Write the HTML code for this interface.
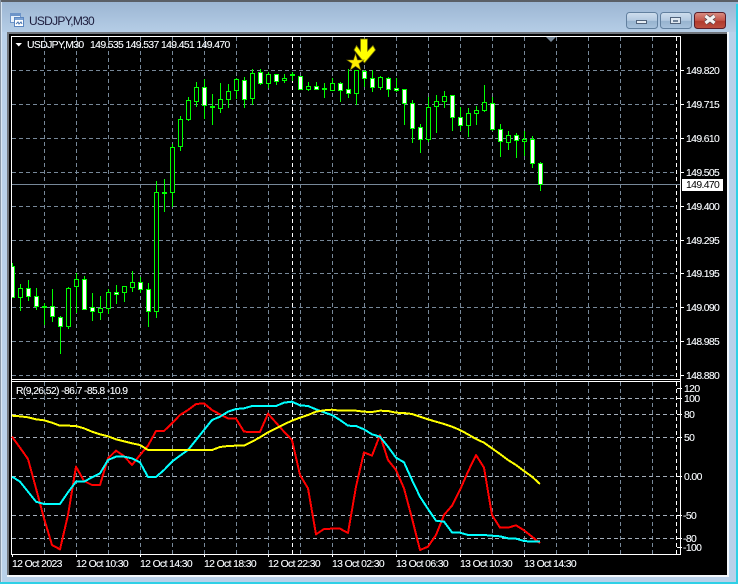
<!DOCTYPE html>
<html>
<head>
<meta charset="utf-8">
<style>
html,body{margin:0;padding:0;background:#b9d1ea;width:738px;height:584px;overflow:hidden}
svg{display:block;position:absolute;left:0;top:0}
text{font-family:"Liberation Sans",sans-serif;font-size:10.4px;fill:#fff;stroke:#e6f2ff;stroke-width:.12px;letter-spacing:-.62px}
</style>
</head>
<body>
<svg width="738" height="584" viewBox="0 0 738 584" xmlns="http://www.w3.org/2000/svg">
<defs>
<linearGradient id="tb" x1="0" y1="0" x2="0" y2="1"><stop offset="0" stop-color="#9cb6d3"/><stop offset="1" stop-color="#b5cde6"/></linearGradient>
<linearGradient id="bb" x1="0" y1="0" x2="0" y2="1"><stop offset="0" stop-color="#cfdeee"/><stop offset=".5" stop-color="#b3c9e0"/><stop offset=".55" stop-color="#97b3cf"/><stop offset="1" stop-color="#a9c3dd"/></linearGradient>
<linearGradient id="cb" x1="0" y1="0" x2="0" y2="1"><stop offset="0" stop-color="#d98f84"/><stop offset=".5" stop-color="#c4554a"/><stop offset=".55" stop-color="#b13a2e"/><stop offset="1" stop-color="#bd5142"/></linearGradient>
</defs>
<!-- window frame -->
<rect width="738" height="584" fill="#b9d1ea"/>
<rect x="0" y="2" width="738" height="30" fill="url(#tb)"/>
<rect x="0" y="0" width="738" height="2" fill="#5a5f66"/>
<rect x="0" y="0" width="1" height="584" fill="#8a98a8"/>
<rect x="1" y="2" width="1" height="580" fill="#d9e6f3"/>
<rect x="736" y="4" width="2" height="580" fill="#2fd0e6"/>
<rect x="0" y="582" width="738" height="2" fill="#2fd0e6"/>
<rect x="7" y="32" width="720" height="2" fill="#70757c"/>
<rect x="7" y="32" width="2" height="544" fill="#70757c"/>
<rect x="727" y="32" width="2" height="545" fill="#f4f8fc"/>
<rect x="7" y="575" width="722" height="2" fill="#f4f8fc"/>
<rect x="9" y="34" width="718" height="541" fill="#000"/>
<!-- title icon -->
<rect x="10.5" y="13.5" width="10" height="9" fill="#e8f1fb" stroke="#6d94c8"/>
<rect x="11" y="14" width="9" height="2" fill="#6d94c8"/>
<rect x="14.5" y="17.5" width="9" height="9" fill="#fff" stroke="#5b86c0"/>
<rect x="15" y="18" width="8" height="2" fill="#7ba2d4"/>
<path d="M16 24l2-2 1 2 2-2 1 2" fill="none" stroke="#4a76b0"/>
<text x="29" y="25" style="font-size:12px;fill:#1c1c3c;stroke:none;letter-spacing:-.75px">USDJPY,M30</text>
<!-- buttons -->
<rect x="626.5" y="12.5" width="31" height="16" rx="3" fill="url(#bb)" stroke="#62809f"/>
<rect x="636.5" y="20.5" width="10" height="3" fill="#e6edf4" stroke="#50627a"/>
<rect x="660.5" y="12.5" width="31" height="16" rx="3" fill="url(#bb)" stroke="#62809f"/>
<rect x="670.5" y="17.5" width="10" height="6" fill="#dfe8f1" stroke="#50627a"/>
<rect x="673" y="20" width="5" height="2" fill="#6f8299"/>
<rect x="694.5" y="12.5" width="31" height="16" rx="3" fill="url(#cb)" stroke="#5a1e2a"/>
<path d="M705.5 16l9 7M714.5 16l-9 7" stroke="#5a4a50" stroke-width="4.6"/>
<path d="M705.5 16l9 7M714.5 16l-9 7" stroke="#f4f4f4" stroke-width="3.2"/>
<!-- grid -->
<g stroke="#778899" stroke-width="1" fill="none" stroke-dasharray="4 3">
<path d="M44.5 37V379M76.5 37V379M108.5 37V379M140.5 37V379M172.5 37V379M204.5 37V379M236.5 37V379M268.5 37V379M300.5 37V379M332.5 37V379M364.5 37V379M396.5 37V379M428.5 37V379M460.5 37V379M492.5 37V379M524.5 37V379M556.5 37V379M588.5 37V379M620.5 37V379M652.5 37V379"/>
<path d="M44.5 382V554M76.5 382V554M108.5 382V554M140.5 382V554M172.5 382V554M204.5 382V554M236.5 382V554M268.5 382V554M300.5 382V554M332.5 382V554M364.5 382V554M396.5 382V554M428.5 382V554M460.5 382V554M492.5 382V554M524.5 382V554M556.5 382V554M588.5 382V554M620.5 382V554M652.5 382V554"/>
<path d="M12 70.5H676M12 104.5H676M12 138.5H676M12 172.5H676M12 206.5H676M12 240.5H676M12 273.5H676M12 307.5H676M12 341.5H676M12 375.5H676"/>
</g>
<g stroke="#a4aeba" stroke-width="1" fill="none" stroke-dasharray="4 3">
<path d="M12 398.5H676M12 414.5H676M12 437.5H676M12 476.5H676M12 515.5H676M12 538.5H676"/>
</g>
<path d="M292.5 37V379M292.5 382V554M676.5 37V379M676.5 382V554" stroke="#fff" stroke-dasharray="4 3" fill="none"/>
<path d="M12 184.5H681" stroke="#778899"/>
<!-- wicks -->
<path stroke="#00ff00" stroke-width="1" fill="none" d="M12.5 263V266M20.5 284V311M28.5 280V301M36.5 288V310M44.5 303V325M52.5 289V322M60.5 316V354M68.5 287V329M76.5 273V313M84.5 276V310M92.5 293V321M100.5 296V320M108.5 289V314M116.5 285V304M124.5 286V302M132.5 271V292M140.5 277V293M148.5 283V327M156.5 181V318M164.5 179V212M172.5 144V207M180.5 116V151M188.5 97V121M196.5 82V107M204.5 79V119M212.5 94V125M220.5 83V113M228.5 84V108M236.5 78V99M244.5 77V108M252.5 69V105M260.5 69V85M268.5 72V88M276.5 74V85M284.5 74V83M292.5 72V81M300.5 76V90M308.5 82V91M316.5 82V90M324.5 83V98M332.5 78V91M340.5 82V102M348.5 69V98M356.5 70V105M364.5 70V87M372.5 70V92M380.5 76V90M388.5 77V97M396.5 78V92M404.5 89V125M412.5 100V143M420.5 124V153M428.5 97V142M436.5 95V133M444.5 91V108M452.5 95V131M460.5 107V131M468.5 108V137M476.5 106V125M484.5 85V112M492.5 97V131M500.5 124V157M508.5 131V150M516.5 133V158M524.5 131V156M532.5 136V168M540.5 162V191"/>
<!-- filled bodies -->
<path stroke="#00ff00" fill="#fff" d="M12 266.5H14.5V297.5H12M26.5 288.5h4v8h-4zM34.5 296.5h4v10h-4zM50.5 306.5h4v10h-4zM58.5 317.5h4v9h-4zM82.5 279.5h4v30h-4zM90.5 307.5h4v4h-4zM114.5 292.5h4v2h-4zM138.5 282.5h4v7h-4zM146.5 289.5h4v22h-4zM202.5 87.5h4v18h-4zM242.5 80.5h4v19h-4zM258.5 72.5h4v11h-4zM274.5 74.5h4v7h-4zM298.5 76.5h4v13h-4zM314.5 86.5h4v3h-4zM338.5 83.5h4v7h-4zM346.5 89.5h4v4h-4zM362.5 71.5h4v7h-4zM370.5 78.5h4v9h-4zM386.5 78.5h4v11h-4zM394.5 88.5h4v2h-4zM402.5 89.5h4v14h-4zM410.5 103.5h4v25h-4zM418.5 127.5h4v12h-4zM450.5 95.5h4v22h-4zM458.5 117.5h4v8h-4zM490.5 103.5h4v26h-4zM498.5 129.5h4v12h-4zM514.5 135.5h4v5h-4zM530.5 139.5h4v24h-4zM538.5 163.5h4v21h-4z"/>
<!-- hollow bodies -->
<path stroke="#00ff00" fill="#000" d="M18.5 288.5h4v9h-4zM66.5 288.5h4v38h-4zM74.5 279.5h4v7h-4zM98.5 308.5h4v4h-4zM106.5 292.5h4v16h-4zM122.5 286.5h4v6h-4zM130.5 282.5h4v5h-4zM154.5 192.5h4v119h-4zM170.5 147.5h4v45h-4zM178.5 119.5h4v27h-4zM186.5 100.5h4v19h-4zM194.5 87.5h4v14h-4zM218.5 99.5h4v9h-4zM226.5 91.5h4v8h-4zM234.5 79.5h4v11h-4zM250.5 73.5h4v25h-4zM266.5 74.5h4v9h-4zM282.5 78.5h4v2h-4zM306.5 86.5h4v3h-4zM330.5 83.5h4v7h-4zM354.5 70.5h4v23h-4zM378.5 77.5h4v10h-4zM426.5 107.5h4v32h-4zM434.5 101.5h4v5h-4zM442.5 96.5h4v5h-4zM466.5 113.5h4v12h-4zM474.5 110.5h4v3h-4zM482.5 102.5h4v8h-4zM506.5 135.5h4v7h-4zM522.5 139.5h4v2h-4z"/>
<!-- dojis -->
<path stroke="#00ff00" stroke-width="2" fill="none" d="M42 307h5M162 193h5M210 107h5M290 75h5M322 89h5"/>
<!-- arrow and star -->
<path d="M360.5 39H367.5V51L373 45.5 375.5 50 364.5 63 354 50 356.5 45.5 360.5 51Z" fill="#ffff00" stroke="#6e6a00" stroke-width=".8"/>
<path d="M355.5 54L357.5 60H364L358.8 63.6 360.8 70 355.5 66.2 350.2 70 352.2 63.6 347 60H353.5Z" fill="#ffee00" stroke="#7a7000" stroke-width=".6"/>
<polygon points="546,37 556,37 551,42" fill="#778899"/>
<!-- chart borders -->
<path d="M11 36.5H680.5V554.5H11.5V36M11 379.5H681M11 381.5H681" stroke="#fff" fill="none"/>
<path d="M681 70.5h3M681 104.5h3M681 138.5h3M681 172.5h3M681 206.5h3M681 240.5h3M681 273.5h3M681 307.5h3M681 341.5h3M681 375.5h3M677 388.5h5M677 398.5h5M677 414.5h5M677 437.5h5M677 476.5h5M677 515.5h5M677 538.5h5M677 547.5h5M12.5 554V557M76.5 554V557M140.5 554V557M204.5 554V557M268.5 554V557M332.5 554V557M396.5 554V557M460.5 554V557M524.5 554V557" stroke="#fff" fill="none"/>
<!-- oscillator lines -->
<g transform="translate(0,375) scale(.33333)" fill="none" stroke-width="6" stroke-linejoin="round" shape-rendering="crispEdges">
<polyline stroke="#ff0000" points="36,185 60,218 84,252 108,340 132,430 156,510 180,523 204,420 228,275 252,318 276,330 300,330 324,250 348,227 372,243 396,270 420,240 444,212 468,168 492,168 516,145 540,120 564,105 588,87 612,85 636,105 660,118 684,130 708,131 732,170 756,171 780,171 804,116 828,143 852,170 876,195 900,300 924,340 948,478 972,462 996,461 1020,461 1044,474 1068,335 1092,232 1116,242 1140,180 1164,255 1188,285 1212,340 1236,430 1260,525 1284,515 1308,480 1332,420 1356,392 1380,345 1404,290 1428,240 1452,278 1476,420 1500,458 1524,458 1548,451 1572,466 1596,485 1620,505"/>
<polyline stroke="#00ffff" points="36,305 60,320 84,350 108,380 132,387 156,387 180,387 204,352 228,320 252,320 276,307 300,295 324,255 348,245 372,245 396,250 420,262 444,306 468,306 492,285 516,260 540,242 564,225 588,195 612,165 636,135 660,125 684,110 708,102 732,100 756,93 780,93 804,93 828,93 852,83 876,80 900,91 924,93 948,103 972,112 996,120 1020,135 1044,152 1068,153 1092,163 1116,178 1140,185 1164,215 1188,248 1212,262 1236,315 1260,365 1284,402 1308,437 1332,440 1356,472 1380,473 1404,480 1428,480 1452,480 1476,482 1500,484 1524,490 1548,491 1572,498 1596,500 1620,500"/>
<polyline stroke="#ffff00" points="36,122 60,124 84,127 108,133 132,136 156,143 180,152 204,152 228,153 252,160 276,170 300,178 324,184 348,193 372,199 396,205 420,210 444,225 468,225 492,225 516,225 540,225 564,225 588,225 612,225 636,225 660,216 684,213 708,212 732,212 756,200 780,187 804,172 828,160 852,148 876,137 900,128 924,120 948,110 972,106 996,104 1020,107 1044,107 1068,107 1092,110 1116,111 1140,107 1164,108 1188,113 1212,114 1236,117 1260,125 1284,133 1308,140 1332,147 1356,155 1380,165 1404,178 1428,192 1452,203 1476,220 1500,237 1524,255 1548,270 1572,288 1596,305 1620,327"/>
</g>
<!-- header texts -->
<polygon points="15.5,43 22,43 18.75,46.5" fill="#fff"/>
<text x="27" y="48">USDJPY,M30</text>
<text x="90" y="48">149.535 149.537 149.451 149.470</text>
<text x="16" y="394">R(9,26,52) -86.7 -85.8 -10.9</text>
<!-- price axis -->
<text x="686" y="74">149.820</text>
<text x="686" y="108">149.715</text>
<text x="686" y="142">149.610</text>
<text x="686" y="176">149.505</text>
<text x="686" y="210">149.400</text>
<text x="686" y="244">149.295</text>
<text x="686" y="277">149.195</text>
<text x="686" y="311">149.090</text>
<text x="686" y="345">148.985</text>
<text x="686" y="379">148.880</text>
<rect x="682" y="179" width="41" height="12" fill="#fff"/>
<text x="686" y="188" style="fill:#000;stroke:none">149.470</text>
<!-- oscillator axis -->
<text x="684" y="392">120</text>
<text x="684" y="402">100</text>
<text x="684" y="418">80</text>
<text x="684" y="441">50</text>
<text x="684" y="480">0.00</text>
<text x="683" y="519">-50</text>
<text x="683" y="542">-80</text>
<text x="683" y="551">-100</text>
<!-- time axis -->
<text x="12" y="567">12 Oct 2023</text>
<text x="76" y="567">12 Oct 10:30</text>
<text x="140" y="567">12 Oct 14:30</text>
<text x="204" y="567">12 Oct 18:30</text>
<text x="268" y="567">12 Oct 22:30</text>
<text x="332" y="567">13 Oct 02:30</text>
<text x="396" y="567">13 Oct 06:30</text>
<text x="460" y="567">13 Oct 10:30</text>
<text x="524" y="567">13 Oct 14:30</text>
</svg>
</body>
</html>
